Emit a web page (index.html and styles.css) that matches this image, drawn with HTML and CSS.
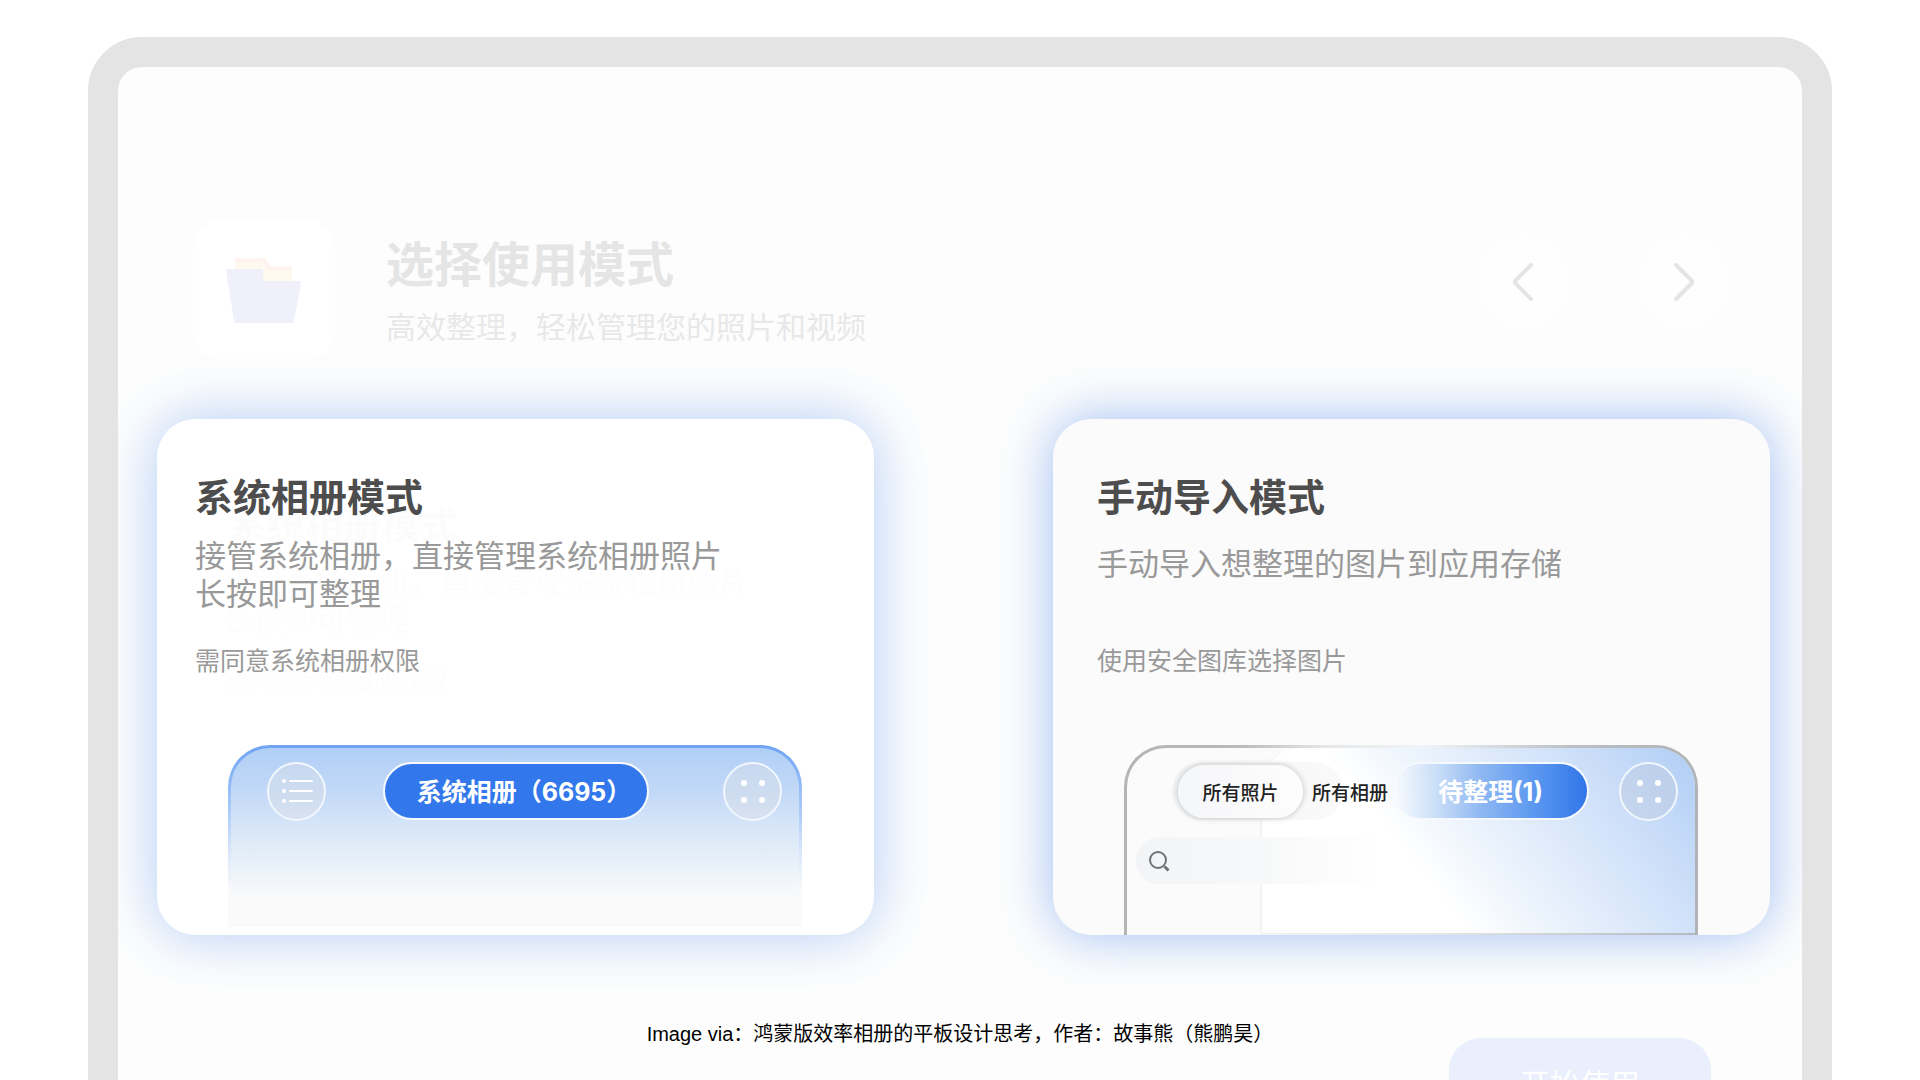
FILE: index.html
```html
<!DOCTYPE html>
<html lang="zh-CN">
<head>
<meta charset="utf-8">
<meta name="viewport" content="width=device-width, initial-scale=1">
<title>选择使用模式</title>
<link rel="stylesheet" href="styles.css">
</head>
<body>
<div class="page">
  <main class="tablet">
    <header class="intro">
      <div class="logo">
        <svg class="logo-icon" viewBox="0 0 76 66" aria-hidden="true">
          <path d="M9 1h30l5 8h22v22H9z" fill="#fff8ef"/>
          <path d="M9 1h30l5 8h22v4H42l-5-8H9z" fill="#fff3f0"/>
          <path d="M0 14q0-2 2-2h35v9q0 3 3 3h34q2 0 1 2l-7 38q0 2-2 2H10q-2 0-2-2z" fill="#f0f0fb"/>
        </svg>
      </div>
      <div class="intro-text">
        <h1 class="intro-title">选择使用模式</h1>
        <p class="intro-subtitle">高效整理，轻松管理您的照片和视频</p>
      </div>
      <nav class="pager" aria-label="翻页">
        <button class="pager-button" type="button" aria-label="上一页">
          <svg width="24" height="42" viewBox="0 0 24 42" aria-hidden="true"><path d="M20 4 4.500 19.500q-1.500 1.500 0 3L20 38"/></svg>
        </button>
        <button class="pager-button" type="button" aria-label="下一页">
          <svg width="24" height="42" viewBox="0 0 24 42" aria-hidden="true"><path d="M4 4 19.500 19.500q1.500 1.500 0 3L4 38"/></svg>
        </button>
      </nav>
    </header>

    <div class="modes">
      <section class="mode mode-system">
        <div class="mode-text">
          <h2 class="mode-title">系统相册模式</h2>
          <p class="mode-desc">接管系统相册，直接管理系统相册照片<br>长按即可整理</p>
          <p class="mode-note">需同意系统相册权限</p>
        </div>
        <div class="preview preview-system">
          <div class="toolbar">
            <button class="round-button" type="button" aria-label="列表">
              <svg width="32" height="26" viewBox="0 0 32 26" aria-hidden="true">
                <g fill="#fff"><circle cx="3" cy="3" r="2"/><circle cx="3" cy="13" r="2"/><circle cx="3" cy="23" r="2"/></g>
                <path d="M9 3h22M9 13h22M9 23h22" stroke="#fff" stroke-width="2" stroke-linecap="round"/>
              </svg>
            </button>
            <button class="pill pill-album" type="button">系统相册（6695）</button>
            <button class="round-button round-button-end" type="button" aria-label="更多">
              <svg width="26" height="26" viewBox="0 0 26 26" fill="#fff" aria-hidden="true"><circle cx="4" cy="5" r="3"/><circle cx="22" cy="5" r="3"/><circle cx="4" cy="22" r="3"/><circle cx="22" cy="22" r="3"/></svg>
            </button>
          </div>
        </div>
      </section>

      <section class="mode mode-manual">
        <div class="mode-text">
          <h2 class="mode-title">手动导入模式</h2>
          <p class="mode-desc">手动导入想整理的图片到应用存储</p>
          <p class="mode-note">使用安全图库选择图片</p>
        </div>
        <div class="preview preview-manual">
          <div class="toolbar">
            <div class="segments">
              <button class="segment segment-active" type="button">所有照片</button>
              <button class="segment" type="button">所有相册</button>
            </div>
            <button class="pill pill-pending" type="button">待整理(1)</button>
            <button class="round-button round-button-end" type="button" aria-label="更多">
              <svg width="26" height="26" viewBox="0 0 26 26" fill="#fff" aria-hidden="true"><circle cx="4" cy="5" r="3"/><circle cx="22" cy="5" r="3"/><circle cx="4" cy="22" r="3"/><circle cx="22" cy="22" r="3"/></svg>
            </button>
          </div>
          <label class="search">
            <svg width="24" height="24" viewBox="0 0 24 24" fill="none" stroke="#707275" stroke-width="2" aria-hidden="true"><circle cx="11" cy="11" r="8"/><path d="m17.500 17.500 4 4" stroke-width="3"/></svg>
            <input class="search-input" type="search" aria-label="搜索">
          </label>
        </div>
      </section>
    </div>

    <footer class="bottom">
      <p class="credit">Image via：鸿蒙版效率相册的平板设计思考，作者：故事熊（熊鹏昊）</p>
      <button class="start-button" type="button">开始使用</button>
    </footer>
  </main>
</div>
</body>
</html>
```
FILE: styles.css
```css
* {
  box-sizing: border-box;
}

body {
  margin: 0;
  background: #fff;
  font-family: "Noto Sans CJK SC", sans-serif;
}

h1, h2, p {
  margin: 0;
}

button {
  padding: 0;
  border: 0;
  background: none;
  font-family: inherit;
  white-space: nowrap;
}

.page {
  height: 100vh;
  padding: 37px 88px 0;
  overflow: hidden;
}

.tablet {
  padding-top: 152px;
  padding-bottom: 120px;
  overflow: hidden;
  background: #fdfdfd;
  border: 30px solid #e4e4e4;
  border-radius: 54px;
}

/* Heading row */

.intro {
  display: flex;
  align-items: center;
  padding: 0 73px 0 75px;
}

.logo {
  display: flex;
  align-items: center;
  justify-content: center;
  width: 142px;
  height: 142px;
  background: #fff;
  border-radius: 32px;
}

.logo-icon {
  width: 76px;
  height: 66px;
}

.intro-text {
  display: grid;
  gap: 16px;
  margin-left: 51px;
  padding-bottom: 2px;
}

.intro-title {
  color: #e5e5e5;
  font-size: 48px;
  font-weight: 700;
  line-height: 56px;
}

.intro-subtitle {
  color: #e8e8e8;
  font-size: 30px;
  font-weight: 400;
  line-height: 40px;
}

.pager {
  display: flex;
  align-self: flex-start;
  gap: 71px;
  margin-left: auto;
  padding-top: 18px;
}

.pager-button {
  display: flex;
  align-items: center;
  justify-content: center;
  width: 90px;
  height: 90px;
  background: #fefefe;
  border-radius: 50%;
}

.pager-button path {
  fill: none;
  stroke: #e4e4e4;
  stroke-width: 4;
  stroke-linecap: round;
}

/* Mode cards */

.modes {
  display: grid;
  grid-template-columns: 1fr 1fr;
  gap: 179px;
  padding: 58px 32px 0 39px;
}

.mode {
  display: flex;
  flex-direction: column;
  height: 516px;
  padding-top: 52px;
  border-radius: 38px;
}

.mode-system {
  background: #fff;
  box-shadow: 0 0 56px rgba(66, 130, 236, 0.4);
}

.mode-manual {
  background: #fbfbfb;
  box-shadow: 0 0 52px rgba(66, 130, 236, 0.5);
}

.mode-text {
  padding: 0 38px;
}

.mode-manual .mode-text {
  padding: 0 44px;
}

.mode-title {
  color: #4d4d4d;
  font-size: 38px;
  font-weight: 700;
  line-height: 48px;
}

.mode-desc {
  min-height: 106px;
  margin-top: 16px;
  color: #999;
  font-size: 31px;
  line-height: 38px;
}

.mode-manual .mode-desc {
  padding-top: 8px;
}

.mode-note {
  color: #999;
  font-size: 25px;
  line-height: 36px;
}

/* Soft echo of the copy behind the first card */
.mode-system .mode-title {
  text-shadow: 34px 28px 1px rgba(0, 0, 0, 0.014);
}

.mode-system .mode-desc {
  text-shadow: 28px 26px 1px rgba(0, 0, 0, 0.01);
}

.mode-system .mode-note {
  text-shadow: 28px 20px 1px rgba(0, 0, 0, 0.01);
}

/* App previews */

.preview {
  flex: 1;
  margin: 68px 72px 0 71px;
  border: 3px solid transparent;
  border-bottom: 0;
  border-radius: 42px 42px 0 0;
}

.preview-system {
  margin-bottom: 8px;
  background:
    linear-gradient(#b0cff6 0%, #c3d9f7 25%, #d3e3f8 40%, #dfebf7 54%, #eef4fa 70%, #fafafa 84%) padding-box,
    linear-gradient(#6ea3f4 0%, #a9c9f8 35%, #dbe8fb 60%, #fafafa 80%) border-box;
}

.preview-manual {
  position: relative;
  background:
    linear-gradient(#fbfbfb, #fbfbfb) padding-box,
    linear-gradient(90deg, #b4b4b4 0%, #bababa 20%, #e6e6e6 35%, #f0f4f8 52%, #bcbfc4 78%, #b0b3b8 100%) border-box;
}

.preview-manual::before {
  content: "";
  position: absolute;
  inset: 0 0 0 133px;
  background:
    linear-gradient(90deg, #f2f2f2, #e6e6e6 40%, #b4b8be) bottom / 100% 2px no-repeat,
    linear-gradient(52deg, #fff 36%, #edf4fc 50%, #d5e4fa 72%, #c6dbf8 84%, #aecdf5 100%);
  border-left: 2px solid #f3f4f5;
  border-radius: 39px 39px 0 0;
}

.toolbar {
  position: relative;
  display: flex;
  align-items: center;
  height: 58px;
  margin-top: 14px;
  padding: 0 17px 0 36px;
}

.preview-manual .toolbar {
  padding-left: 45px;
}

.round-button {
  display: flex;
  flex: none;
  align-items: center;
  justify-content: center;
  width: 59px;
  height: 59px;
  background: rgba(222, 224, 230, 0.4);
  border: 2px solid #f3f7fd;
  border-radius: 50%;
}

.preview-manual .round-button {
  background: rgba(190, 200, 220, 0.4);
}

.round-button-end {
  margin-left: auto;
}

.pill {
  height: 58px;
  padding-bottom: 2px;
  border: 2px solid #f6f9fe;
  border-radius: 29px;
  color: #fff;
  font-family: Inter, "Noto Sans CJK SC", sans-serif;
  font-size: 25px;
  font-weight: 700;
}

.pill-album {
  width: 266px;
  margin-left: 57px;
  padding-left: 16px;
  background: #3277eb;
}

.pill-pending {
  width: 197px;
  margin-left: 4px;
  background: linear-gradient(90deg, rgba(255, 255, 255, 0.6) 0%, #cbdff8 22%, #8fb8f2 45%, #5c98f0 72%, #2f74e9 100%) border-box;
}

.segments {
  position: relative;
  display: flex;
  align-items: center;
  height: 58px;
  padding-left: 6px;
}

.segments::before {
  content: "";
  position: absolute;
  inset: 0 45px 0 0;
  background: linear-gradient(90deg, rgba(238, 240, 243, 0.6), rgba(248, 248, 249, 0.8));
  border-radius: 29px;
}

.segment {
  position: relative;
  height: 53px;
  padding-left: 9px;
  color: #222;
  font-size: 19px;
  font-weight: 500;
}

.segment-active {
  width: 125px;
  padding: 0;
  background: linear-gradient(90deg, #f5f6f8, #fdfdfd);
  border-radius: 27px;
  box-shadow: 0 0 6px rgba(0, 0, 0, 0.24);
}

.search {
  position: relative;
  display: flex;
  align-items: center;
  gap: 12px;
  width: 244px;
  height: 47px;
  margin: 17px 0 0 9px;
  padding-left: 11px;
  background: linear-gradient(90deg, #f3f4f6 0%, #f7f8f9 50%, rgba(253, 253, 254, 0) 100%);
  border-radius: 24px 0 0 24px;
}

.search-input {
  flex: 1;
  min-width: 0;
  padding: 0;
  border: 0;
  outline: 0;
  background: none;
  font-size: 19px;
}

/* Credit line and call to action */

.bottom {
  display: grid;
  grid-template-columns: 1fr auto 1fr;
  align-items: start;
  padding: 82px 91px 0;
}

.credit {
  grid-column: 2;
  color: #000;
  font-family: "Liberation Sans", "Noto Sans CJK SC", sans-serif;
  font-size: 20px;
  line-height: 34px;
}

.start-button {
  justify-self: end;
  width: 262px;
  height: 92px;
  margin-top: 21px;
  padding-bottom: 4px;
  background: #e9effc;
  border-radius: 32px;
  color: #fff;
  font-size: 30px;
}
```
